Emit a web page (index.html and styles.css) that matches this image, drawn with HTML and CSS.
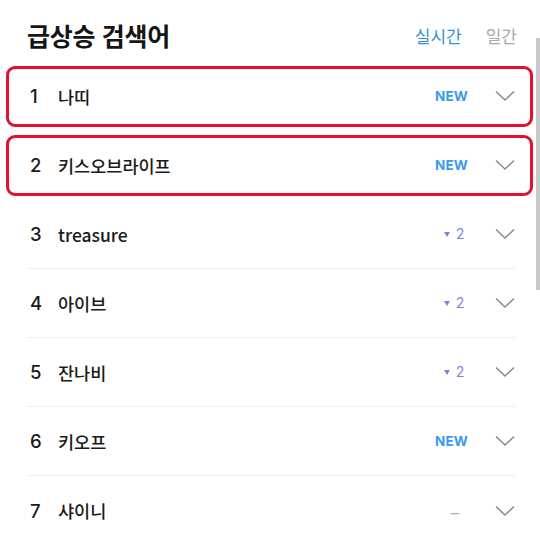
FILE: index.html
```html
<!DOCTYPE html>
<html lang="ko">
<head>
  <meta charset="UTF-8" />
  <meta name="viewport" content="width=device-width, initial-scale=1.0" />
  <title>급상승 검색어</title>
  <link rel="stylesheet" href="styles.css">
</head>
<body>
  <div class="panel">
    <div class="header">
      <h1>급상승 검색어</h1>
      <div class="tabs">
        <span class="tab active">실시간</span>
        <span class="tab">일간</span>
      </div>
    </div>

    <ul class="list">
      <li class="row marked">
        <span class="rank">1</span>
        <span class="word">나띠</span>
        <span class="change new">NEW</span>
        <svg class="chevron" viewBox="0 0 20 12"><path d="M1 1.5 L10 10 L19 1.5" /></svg>
      </li>
      <li class="row marked">
        <span class="rank">2</span>
        <span class="word">키스오브라이프</span>
        <span class="change new">NEW</span>
        <svg class="chevron" viewBox="0 0 20 12"><path d="M1 1.5 L10 10 L19 1.5" /></svg>
      </li>
      <li class="row">
        <span class="rank">3</span>
        <span class="word">treasure</span>
        <span class="change down"><i class="tri"></i>2</span>
        <svg class="chevron" viewBox="0 0 20 12"><path d="M1 1.5 L10 10 L19 1.5" /></svg>
      </li>
      <li class="row">
        <span class="rank">4</span>
        <span class="word">아이브</span>
        <span class="change down"><i class="tri"></i>2</span>
        <svg class="chevron" viewBox="0 0 20 12"><path d="M1 1.5 L10 10 L19 1.5" /></svg>
      </li>
      <li class="row">
        <span class="rank">5</span>
        <span class="word">잔나비</span>
        <span class="change down"><i class="tri"></i>2</span>
        <svg class="chevron" viewBox="0 0 20 12"><path d="M1 1.5 L10 10 L19 1.5" /></svg>
      </li>
      <li class="row">
        <span class="rank">6</span>
        <span class="word">키오프</span>
        <span class="change new">NEW</span>
        <svg class="chevron" viewBox="0 0 20 12"><path d="M1 1.5 L10 10 L19 1.5" /></svg>
      </li>
      <li class="row">
        <span class="rank">7</span>
        <span class="word">샤이니</span>
        <span class="change same">–</span>
        <svg class="chevron" viewBox="0 0 20 12"><path d="M1 1.5 L10 10 L19 1.5" /></svg>
      </li>
    </ul>
  </div>
  <div class="scrollbar"></div>
</body>
</html>
```

FILE: styles.css
```css
* {
  box-sizing: border-box;
}
body {
  margin: 0;
  background: #fff;
  font-family: "Noto Sans CJK KR", "Noto Sans", sans-serif;
  color: #1a1a1a;
  height: 540px;
  overflow: hidden;
}
.panel {
  padding: 0 25px 0 27px;
}
.header {
  display: flex;
  align-items: center;
  justify-content: space-between;
  height: 62px;
  padding-top: 7px;
}
h1 {
  margin: 0;
  font-size: 25px;
  font-weight: 700;
  letter-spacing: -0.3px;
  color: #151515;
}
.tabs {
  display: flex;
  gap: 24px;
  font-size: 17px;
  padding-top: 2px;
  margin-right: -2px;
}
.tab {
  color: #a8a8a8;
}
.tab.active {
  color: #3592d6;
}
.list {
  list-style: none;
  margin: 0;
  padding: 0;
}
.row {
  position: relative;
  display: flex;
  align-items: center;
  height: 69px;
  border-bottom: 1px solid #f0f0f0;
  font-size: 17.5px;
}
.row.marked {
  border-bottom-color: transparent;
}
.row.marked::after {
  content: "";
  position: absolute;
  left: -21px;
  right: -18px;
  top: 4px;
  bottom: 3px;
  border: 3px solid #e3102f;
  border-radius: 9px;
}
.row:last-child {
  border-bottom: none;
}
.rank {
  width: 31px;
  padding-left: 3px;
  font-family: "Inter", "Noto Sans", sans-serif;
  font-size: 18.5px;
  font-weight: 500;
}
.word {
  flex: 1;
  font-weight: 500;
}
.change {
  font-size: 13px;
  margin-right: 27px;
}
.change.new {
  font-family: "Inter", "Noto Sans", sans-serif;
  font-size: 13.5px;
  font-weight: 700;
  color: #3a9be6;
  letter-spacing: 0.2px;
}
.change.down {
  display: flex;
  align-items: center;
  gap: 6px;
  color: #7c84d6;
  font-family: "Roboto", sans-serif;
  font-size: 14px;
  margin-right: 31px;
}
.tri {
  width: 0;
  height: 0;
  border-left: 3px solid transparent;
  border-right: 3px solid transparent;
  border-top: 5px solid #7c84d6;
}
.change.same {
  font-size: 19px;
  color: #b0b0b0;
  margin-right: 35px;
}
.chevron {
  width: 20px;
  height: 12px;
  fill: none;
  stroke: #8a8a8a;
  stroke-width: 1.5;
}
.scrollbar {
  position: absolute;
  right: 0;
  top: 38px;
  width: 4px;
  height: 252px;
  background: #c9c9c9;
}
```
